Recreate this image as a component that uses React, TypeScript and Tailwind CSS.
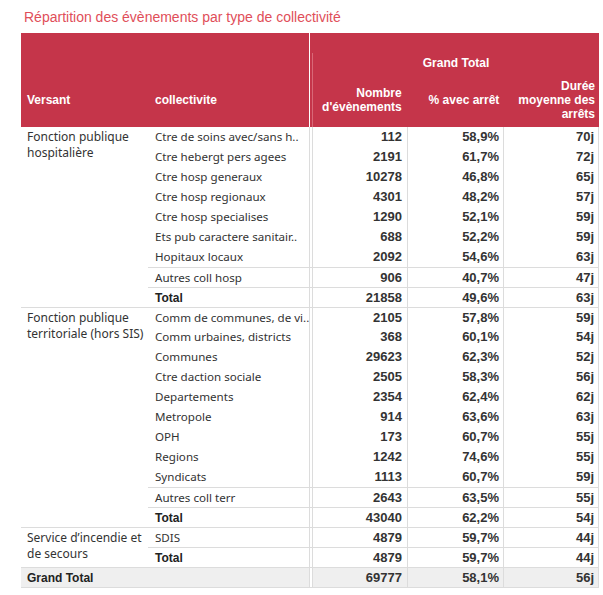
import React from "react";

type Line = "none" | "partial" | "full";

type RowData = {
  label: string;
  n: string;
  pct: string;
  dur: string;
  bold?: boolean;
  line?: Line;
  versant?: string[];
};

const rows: RowData[] = [
  { label: "Ctre de soins avec/sans h..", n: "112", pct: "58,9%", dur: "70j", versant: ["Fonction publique", "hospitalière"] },
  { label: "Ctre hebergt pers agees", n: "2191", pct: "61,7%", dur: "72j" },
  { label: "Ctre hosp generaux", n: "10278", pct: "46,8%", dur: "65j" },
  { label: "Ctre hosp regionaux", n: "4301", pct: "48,2%", dur: "57j" },
  { label: "Ctre hosp specialises", n: "1290", pct: "52,1%", dur: "59j" },
  { label: "Ets pub caractere sanitair..", n: "688", pct: "52,2%", dur: "59j" },
  { label: "Hopitaux locaux", n: "2092", pct: "54,6%", dur: "63j" },
  { label: "Autres coll hosp", n: "906", pct: "40,7%", dur: "47j", line: "partial" },
  { label: "Total", n: "21858", pct: "49,6%", dur: "63j", bold: true, line: "partial" },
  { label: "Comm de communes, de vi..", n: "2105", pct: "57,8%", dur: "59j", line: "full", versant: ["Fonction publique", "territoriale (hors SIS)"] },
  { label: "Comm urbaines, districts", n: "368", pct: "60,1%", dur: "54j" },
  { label: "Communes", n: "29623", pct: "62,3%", dur: "52j" },
  { label: "Ctre daction sociale", n: "2505", pct: "58,3%", dur: "56j" },
  { label: "Departements", n: "2354", pct: "62,4%", dur: "62j" },
  { label: "Metropole", n: "914", pct: "63,6%", dur: "63j" },
  { label: "OPH", n: "173", pct: "60,7%", dur: "55j" },
  { label: "Regions", n: "1242", pct: "74,6%", dur: "55j" },
  { label: "Syndicats", n: "1113", pct: "60,7%", dur: "59j" },
  { label: "Autres coll terr", n: "2643", pct: "63,5%", dur: "55j", line: "partial" },
  { label: "Total", n: "43040", pct: "62,2%", dur: "54j", bold: true, line: "partial" },
  { label: "SDIS", n: "4879", pct: "59,7%", dur: "44j", line: "full", versant: ["Service d’incendie et", "de secours"] },
  { label: "Total", n: "4879", pct: "59,7%", dur: "44j", bold: true, line: "partial" },
];

const Row = ({ r }: { r: RowData }) => {
  const line = r.line ?? "none";
  const full = line === "full" ? "border-t border-[#dcdcdc]" : "";
  const part = line !== "none" ? "border-t border-[#dcdcdc]" : "";
  return (
    <div className="flex h-[20px]">
      <div className={`w-[127px] shrink-0 pl-[6px] pt-[2px] text-[12px] leading-[16px] whitespace-nowrap ${full}`}>
        {r.versant && (
          <>
            {r.versant[0]}
            <br />
            {r.versant[1]}
          </>
        )}
      </div>
      <div
        className={`w-[161px] shrink-0 pl-[7px] flex items-center whitespace-nowrap overflow-hidden ${part} ${
          r.bold
            ? "font-['Liberation_Sans',Arial,sans-serif] font-bold text-[12px] text-[#222]"
            : "text-[11.6px]"
        }`}
      >
        {r.label}
      </div>
      <div className={`w-[4px] shrink-0 border-x border-[#dcdcdc] ${part}`} />
      <div className={`w-[94px] shrink-0 pr-[5px] flex items-center justify-end num ${part}`}>{r.n}</div>
      <div className={`w-[96px] shrink-0 pr-[4px] flex items-center justify-end border-l border-[#dcdcdc] num ${part}`}>{r.pct}</div>
      <div className={`w-[96px] shrink-0 pr-[4px] flex items-center justify-end border-x border-[#dcdcdc] num ${part}`}>{r.dur}</div>
    </div>
  );
};

export default function App() {
  const num = "font-['Liberation_Sans',Arial,sans-serif] font-bold text-[13px] text-[#333]";
  return (
    <div className="w-[603px] h-[595px] bg-white text-[#333] font-['Noto_Sans',sans-serif]">
      <style>{`.num{font-family:'Liberation Sans',Arial,sans-serif;font-weight:700;font-size:13px;color:#333}`}</style>
      <div className="h-[33px] pl-[24px] pt-[9px] text-[14px] leading-[16px] text-[#df4e59] font-['Liberation_Sans',Arial,sans-serif]">
        Répartition des évènements par type de collectivité
      </div>

      <div className="ml-[21px] w-[578px]">
        {/* header */}
        <div className="flex h-[94px] text-white font-['Liberation_Sans',Arial,sans-serif] font-bold text-[12px] leading-[14px]">
          <div className="w-[288px] bg-[#c5354a] flex flex-col justify-end">
            <div className="h-[54px] flex items-center">
              <div className="w-[127px] pl-[6px]">Versant</div>
              <div className="pl-[7px]">collectivite</div>
            </div>
          </div>
          <div className="w-[1px] bg-white" />
          <div className="w-[289px] bg-[#c5354a] pt-[20px] pl-[2px]">
            <div className="h-full border-l border-[#d86877] flex flex-col">
              <div className="h-[20px] flex items-center justify-center">Grand Total</div>
              <div className="h-[54px] flex">
                <div className="w-[95px] pr-[6px] flex items-center justify-end text-right">
                  Nombre
                  <br />
                  d'évènements
                </div>
                <div className="w-[96px] pr-[4px] flex items-center justify-end text-right">% avec arrêt</div>
                <div className="w-[96px] pr-[4px] flex items-center justify-end text-right">
                  Durée
                  <br />
                  moyenne des
                  <br />
                  arrêts
                </div>
              </div>
            </div>
          </div>
        </div>

        {/* body */}
        {rows.map((r, i) => (
          <Row key={i} r={r} />
        ))}

        {/* grand total */}
        <div className="flex h-[21px] border-b border-[#dcdcdc]">
          <div className="w-[288px] shrink-0 pl-[6px] flex items-center bg-[#efefef] border-t border-[#dcdcdc] font-['Liberation_Sans',Arial,sans-serif] font-bold text-[12px] text-[#222]">
            Grand Total
          </div>
          <div className="w-[4px] shrink-0 border-x border-t border-[#dcdcdc] bg-white" />
          <div className={`w-[94px] shrink-0 pr-[5px] flex items-center justify-end bg-[#efefef] border-t border-[#dcdcdc] ${num}`}>69777</div>
          <div className={`w-[96px] shrink-0 pr-[4px] flex items-center justify-end bg-[#efefef] border-t border-l border-[#dcdcdc] ${num}`}>58,1%</div>
          <div className={`w-[96px] shrink-0 pr-[4px] flex items-center justify-end bg-[#efefef] border-t border-x border-[#dcdcdc] ${num}`}>56j</div>
        </div>
      </div>
    </div>
  );
}
